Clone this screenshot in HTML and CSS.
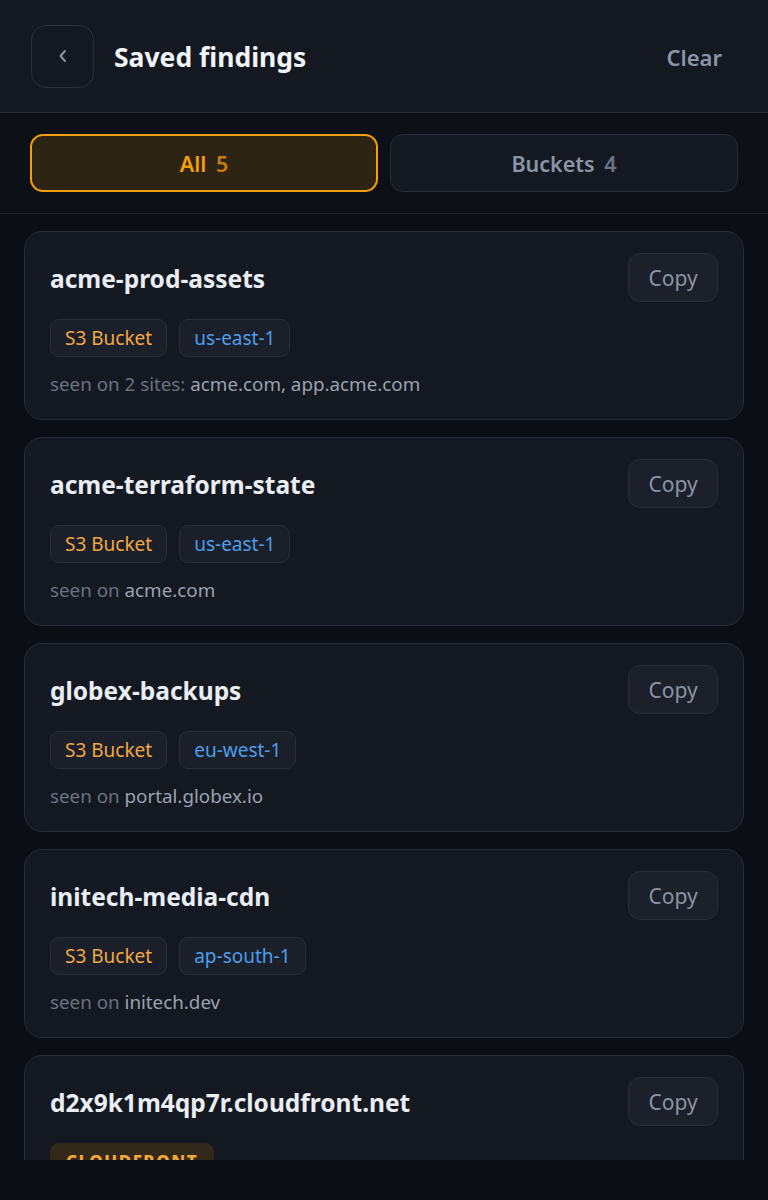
FILE: index.html
```html
<!DOCTYPE html>
<html lang="en">
<head>
<meta charset="utf-8">
<title>Saved findings</title>
<link rel="stylesheet" href="styles.css">
</head>
<body>
<div class="app">
  <header class="topbar">
    <button class="back" aria-label="Back">
      <svg width="16" height="16" viewBox="0 0 16 16" fill="none"><path d="M10 3 L5.5 8 L10 13" stroke="#8b93a3" stroke-width="2" stroke-linecap="round" stroke-linejoin="round"/></svg>
    </button>
    <h1 class="title">Saved findings</h1>
    <button class="clear">Clear</button>
  </header>
  <nav class="tabs">
    <button class="tab active">All <span class="count">5</span></button>
    <button class="tab">Buckets <span class="count">4</span></button>
  </nav>
  <main class="list">
    <article class="card">
      <div class="card-top">
        <h2 class="name">acme-prod-assets</h2>
        <button class="copy">Copy</button>
      </div>
      <div class="chips">
        <span class="chip type">S3 Bucket</span>
        <span class="chip region">us-east-1</span>
      </div>
      <p class="seen">seen on 2 sites: <span class="sites">acme.com, app.acme.com</span></p>
    </article>
    <article class="card">
      <div class="card-top">
        <h2 class="name">acme-terraform-state</h2>
        <button class="copy">Copy</button>
      </div>
      <div class="chips">
        <span class="chip type">S3 Bucket</span>
        <span class="chip region">us-east-1</span>
      </div>
      <p class="seen">seen on <span class="sites">acme.com</span></p>
    </article>
    <article class="card">
      <div class="card-top">
        <h2 class="name">globex-backups</h2>
        <button class="copy">Copy</button>
      </div>
      <div class="chips">
        <span class="chip type">S3 Bucket</span>
        <span class="chip region">eu-west-1</span>
      </div>
      <p class="seen">seen on <span class="sites">portal.globex.io</span></p>
    </article>
    <article class="card">
      <div class="card-top">
        <h2 class="name">initech-media-cdn</h2>
        <button class="copy">Copy</button>
      </div>
      <div class="chips">
        <span class="chip type">S3 Bucket</span>
        <span class="chip region">ap-south-1</span>
      </div>
      <p class="seen">seen on <span class="sites">initech.dev</span></p>
    </article>
    <article class="card">
      <div class="card-top">
        <h2 class="name">d2x9k1m4qp7r.cloudfront.net</h2>
        <button class="copy">Copy</button>
      </div>
      <div class="chips">
        <span class="chip badge">CLOUDFRONT</span>
      </div>
      <p class="seen">seen on <span class="sites">acme.com</span></p>
    </article>
  </main>
</div>
</body>
</html>
```
FILE: styles.css
```css
* { box-sizing: border-box; }
html, body { margin: 0; padding: 0; }
body {
  background: #0b0e15;
  font-family: "Noto Sans", "Open Sans", sans-serif;
  color: #e8ecf3;
}
button { font-family: inherit; cursor: pointer; }
.app {
  height: 1160px;
  overflow: hidden;
  display: flex;
  flex-direction: column;
}
.topbar {
  height: 113px;
  flex: none;
  display: flex;
  align-items: center;
  padding: 0 30px 0 31px;
  background: #141821;
  border-bottom: 1px solid #262c37;
}
.back {
  width: 63px;
  height: 63px;
  border-radius: 15px;
  border: 1.5px solid #2a303b;
  background: #141821;
  display: flex;
  align-items: center;
  justify-content: center;
  padding: 0;
}
.title {
  margin: 2px 0 0 20px;
  font-size: 26.5px;
  font-weight: 700;
  color: #f1f4f9;
  flex: 1;
}
.clear {
  background: none;
  border: none;
  color: #8b95a7;
  font-size: 22px;
  font-weight: 600;
  padding: 0 16px;
  margin-top: 2px;
  height: 48px;
}
.tabs {
  flex: none;
  display: grid;
  grid-template-columns: 1fr 1fr;
  gap: 12px;
  padding: 21px 30px;
  border-bottom: 1px solid #1f242e;
  background: #0d1017;
}
.tab {
  height: 58px;
  border-radius: 13px;
  border: 1.5px solid #272d39;
  background: #141820;
  color: #8b95a7;
  font-size: 21.5px;
  font-weight: 600;
}
.tab .count { color: #6b7384; margin-left: 4px; }
.tab.active {
  background: #2e2414;
  border: 2px solid #f59e0b;
  color: #f59e0b;
}
.tab.active .count { color: #c87d0f; }
.list {
  flex: 1;
  display: flex;
  flex-direction: column;
  gap: 17px;
  padding: 17px 24px;
}
.card {
  flex: none;
  background: #141820;
  border: 1.5px solid #262c38;
  border-radius: 18px;
  padding: 21px 25px 21px 25px;
}
.card-top {
  display: flex;
  align-items: center;
  justify-content: space-between;
}
.name {
  margin: 2px 0 0;
  font-size: 24.5px;
  font-weight: 700;
  color: #e9edf4;
}
.copy {
  width: 90px;
  height: 49px;
  border-radius: 12px;
  border: 1.5px solid #272d39;
  background: #1b202b;
  color: #8b93a3;
  font-size: 21px;
  padding: 0;
}
.chips {
  display: flex;
  gap: 12px;
  margin-top: 17px;
}
.chip {
  height: 38px;
  display: inline-flex;
  align-items: center;
  padding: 0 14px;
  border-radius: 9px;
  border: 1.5px solid #272d39;
  background: #1a1f2a;
  font-size: 19px;
}
.chip.type { color: #f0a840; }
.chip.region { color: #4c9eeb; }
.chip.badge {
  background: #33291b;
  border-color: #33291b;
  color: #f5a93a;
  font-weight: 800;
  font-size: 17px;
  letter-spacing: 1.5px;
  padding: 0 15px;
  height: 36px;
}
.seen {
  margin: 13px 0 0;
  font-size: 18.8px;
  line-height: 28px;
  color: #6b7281;
}
.seen .sites { color: #9aa2b0; }
```
